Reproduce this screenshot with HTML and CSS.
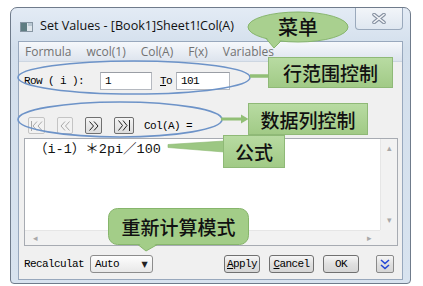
FILE: index.html
```html
<!DOCTYPE html>
<html lang="en">
<head>
    <meta charset="UTF-8">
    <title>Set Values</title>
    <link rel="stylesheet" href="styles.css">
</head>
<body>
    <div class="stage">
        <div class="window">
            <div class="titlebar">
                <svg class="app-icon" width="13" height="10" viewBox="0 0 13 10">
                    <rect x="0.5" y="0.5" width="12" height="9" fill="#dfe6ec" stroke="#8796a3"/>
                    <rect x="1" y="1" width="6" height="8" fill="#5f7d82"/>
                    <rect x="8" y="1" width="4" height="3" fill="#b9c8d3"/>
                </svg>
                <span class="title">Set Values - [Book1]Sheet1!Col(A)</span>
                <div class="close">
                    <svg width="14" height="11" viewBox="0 0 14 11">
                        <path d="M2 1.5 L12 9.5 M12 1.5 L2 9.5" stroke="#8590a0" stroke-width="3.6" stroke-linecap="round"/>
                        <path d="M2 1.5 L12 9.5 M12 1.5 L2 9.5" stroke="#f4f6f9" stroke-width="1.6" stroke-linecap="round"/>
                    </svg>
                </div>
            </div>

            <div class="client">
                <div class="menubar">
                    <span>Formula</span>
                    <span>wcol(1)</span>
                    <span>Col(A)</span>
                    <span>F(x)</span>
                    <span>Variables</span>
                </div>

                <div class="dialog">
                    <!-- row range -->
                    <div class="range-row">
                        <span class="row-label">Row ( i ):</span>
                        <div class="field field-from">1</div>
                        <span class="to-label"><u>T</u>o</span>
                        <div class="field field-to">101</div>
                    </div>

                    <!-- column navigation -->
                    <div class="nav-row">
                        <div class="nav-btn disabled w17">
                            <svg width="13" height="10" viewBox="0 0 13 10"><path d="M1.5 0 V10 M7 0.5 L3 5 L7 9.5 M12 0.5 L8 5 L12 9.5" fill="none" stroke="currentColor"/></svg>
                        </div>
                        <div class="nav-btn disabled w16">
                            <svg width="10" height="10" viewBox="0 0 10 10"><path d="M5 0.5 L1 5 L5 9.5 M9.5 0.5 L5.5 5 L9.5 9.5" fill="none" stroke="currentColor"/></svg>
                        </div>
                        <div class="nav-btn w17">
                            <svg width="10" height="10" viewBox="0 0 10 10"><path d="M0.5 0.5 L4.5 5 L0.5 9.5 M5 0.5 L9 5 L5 9.5" fill="none" stroke="currentColor"/></svg>
                        </div>
                        <div class="nav-btn w20">
                            <svg width="13" height="11" viewBox="0 0 13 11"><path d="M0.5 0.5 L4.5 5.5 L0.5 10.5 M5 0.5 L9 5.5 L5 10.5 M11.5 0 V11" fill="none" stroke="currentColor"/></svg>
                        </div>
                        <span class="col-label">Col(A) =</span>
                    </div>

                    <!-- formula box -->
                    <div class="formula">
                        <div class="formula-text">（i-1）＊2pi／100</div>
                        <div class="vbar">
                            <span class="arrow">▴</span>
                            <span class="arrow">▾</span>
                        </div>
                        <div class="hbar">
                            <span class="arrow">◂</span>
                            <span class="arrow">▸</span>
                        </div>
                        <div class="corner"></div>
                    </div>

                    <div class="footer">
                        <span class="recalc-label">Recalculat</span>
                        <div class="select">
                            <span>Auto</span>
                            <span class="caret">▼</span>
                        </div>
                        <div class="buttons">
                            <div class="btn w36"><u>A</u>pply</div>
                            <div class="btn w45"><u>C</u>ancel</div>
                            <div class="btn w36">OK</div>
                            <div class="btn expand">
                                <svg width="10" height="11" viewBox="0 0 10 11"><path d="M1 1 L5 4.5 L9 1 M1 6 L5 9.5 L9 6" fill="none" stroke="#2346d6" stroke-width="1.6"/></svg>
                            </div>
                        </div>
                    </div>
                </div>
            </div>
        </div>

        <!-- annotation overlay -->
        <svg class="overlay" width="423" height="286" viewBox="0 0 423 286">
            <ellipse cx="134" cy="77.5" rx="116" ry="16.5" fill="none" stroke="#6d93c8" stroke-width="1.6"/>
            <line x1="250" y1="76" x2="269" y2="76" stroke="#92bf76" stroke-width="3.5"/>
            <ellipse cx="120" cy="119.5" rx="102" ry="17.5" fill="none" stroke="#6d93c8" stroke-width="1.6"/>
            <line x1="221" y1="119" x2="243" y2="119" stroke="#92bf76" stroke-width="3"/>
            <polygon points="241,114.5 248.5,119 241,123.5" fill="#92bf76"/>
            <polygon points="168,144.5 168,147.5 224,152 224,141" fill="#9cc783" stroke="#8cb870" stroke-width="0.6"/>

            <polygon points="264,36 283,39 274,48" fill="#a9d08f" stroke="#86b56b"/>
            <ellipse cx="298" cy="27" rx="50" ry="15" fill="#a9d08f" stroke="#86b56b"/>
            <polygon points="266,37 281,39 274,46.5" fill="#a9d08f"/>

            <polygon points="136,243 160,243 146,251" fill="#a3cd88" stroke="#86b56b"/>
            <rect x="108.5" y="208.5" width="140" height="36" rx="9" fill="#a3cd88" stroke="#86b56b"/>
            <polygon points="138,243 158,243 146,249.5" fill="#a3cd88"/>
        </svg>

        <div class="note bubble-menu">菜单</div>
        <div class="note box box-range">行范围控制</div>
        <div class="note box box-data">数据列控制</div>
        <div class="note box box-formula">公式</div>
        <div class="note bubble-recalc">重新计算模式</div>
    </div>
</body>
</html>
```

FILE: styles.css
```css
* {
    margin: 0;
    padding: 0;
    box-sizing: border-box;
}

body {
    width: 423px;
    height: 286px;
    overflow: hidden;
    background: #fff;
    font-family: "Liberation Mono", monospace;
    font-size: 11px;
    color: #000;
}

.stage {
    position: relative;
    width: 423px;
    height: 286px;
    padding: 7px 0 0 10px;
}

/* Window frame */
.window {
    width: 401px;
    height: 277px;
    border: 1px solid #6f7b8b;
    border-radius: 7px 7px 4px 4px;
    background: linear-gradient(#e3ebf5, #d3dfec 40px, #d8e3ef);
    padding: 0 7px 3px 7px;
    display: flex;
    flex-direction: column;
}

.titlebar {
    height: 33px;
    display: flex;
    align-items: flex-start;
    flex-shrink: 0;
}

.app-icon {
    margin: 14px 0 0 2px;
}

.title {
    margin: 10px 0 0 7px;
    font-family: "Open Sans", sans-serif;
    font-size: 12.6px;
    line-height: 16px;
    color: #111;
}

.close {
    margin-left: auto;
    width: 48px;
    height: 22px;
    border: 1px solid #9aa9bc;
    border-top: none;
    border-radius: 0 0 4px 4px;
    background: linear-gradient(#f2f5f9, #dfe7f0);
    display: flex;
    align-items: center;
    justify-content: center;
}

/* Client area */
.client {
    flex: 1;
    border: 1px solid #98a8bd;
    background: #f0f0f0;
    display: flex;
    flex-direction: column;
}

.menubar {
    height: 20px;
    flex-shrink: 0;
    background: linear-gradient(#f6f8fb, #dde4ee);
    border-bottom: 1px solid #cdd6e1;
    display: flex;
    align-items: center;
    gap: 15px;
    padding-left: 6px;
    font-family: "Open Sans", sans-serif;
    font-size: 12px;
    color: #727272;
}

.dialog {
    flex: 1;
    padding: 0 4px 0 5px;
    display: flex;
    flex-direction: column;
    letter-spacing: -0.6px;
}

/* Row range */
.range-row {
    margin-top: 10px;
    height: 18px;
    display: flex;
    align-items: center;
}

.row-label {
    width: 76px;
}

.field {
    height: 18px;
    background: #fff;
    border: 1px solid #b5b9c0;
    border-top-color: #9a9ea5;
    padding-left: 4px;
    line-height: 16px;
}

.field-from {
    width: 52px;
}

.to-label {
    width: 16px;
    margin-left: 8px;
}

.field-to {
    width: 54px;
}

/* Navigation */
.nav-row {
    margin-top: 27px;
    height: 17px;
    display: flex;
    align-items: center;
    padding-left: 4px;
    gap: 12px;
}

.nav-btn {
    height: 17px;
    border: 1px solid #707070;
    border-radius: 2px;
    background: linear-gradient(#f4f4f4, #dcdcdc);
    color: #222;
    display: flex;
    align-items: center;
    justify-content: center;
}

.nav-btn.disabled {
    border-color: #c4c4c4;
    background: #f2f2f2;
    color: #a8a8a8;
}

.w16 { width: 16px; }
.w17 { width: 17px; }
.w20 { width: 20px; }

.col-label {
    margin-left: -2px;
}

/* Formula */
.formula {
    margin-top: 4px;
    width: 374px;
    height: 108px;
    border: 1px solid #a7abb2;
    background: #fff;
    display: grid;
    grid-template-columns: 1fr 17px;
    grid-template-rows: 1fr 15px;
}

.formula-text {
    padding: 3px 0 0 9px;
    font-size: 13.5px;
    line-height: 16px;
    letter-spacing: 0;
    font-family: "Liberation Mono", "Noto Sans CJK SC", monospace;
    color: #111;
}

.vbar {
    background: #f2f2f2;
    border-left: 1px solid #e6e6e6;
    display: flex;
    flex-direction: column;
    justify-content: space-between;
    align-items: center;
    padding: 5px 0 5px;
}

.hbar {
    background: #f2f2f2;
    border-top: 1px solid #e6e6e6;
    display: flex;
    justify-content: space-between;
    align-items: center;
    padding: 0 9px 0 8px;
}

.corner {
    background: #f0f0f0;
}

.arrow {
    font-family: "DejaVu Sans", sans-serif;
    font-size: 9px;
    line-height: 9px;
    color: #a9a9a9;
}

/* Footer */
.footer {
    margin-top: 9px;
    height: 18px;
    display: flex;
    align-items: center;
}

.recalc-label {
    width: 66px;
}

.select {
    width: 63px;
    height: 18px;
    border: 1px solid #8c8c8c;
    border-radius: 3px;
    background: linear-gradient(#fdfdfd, #e8e8e8);
    display: flex;
    align-items: center;
    justify-content: space-between;
    padding: 0 5px 0 4px;
}

.caret {
    font-family: "DejaVu Sans", sans-serif;
    font-size: 8px;
    color: #222;
}

.buttons {
    margin-left: auto;
    margin-right: 4px;
    display: flex;
    gap: 9px;
}

.btn {
    height: 18px;
    border: 1px solid #707070;
    border-radius: 3px;
    background: linear-gradient(#f6f6f6, #e0e0e0 50%, #d6d6d6);
    display: flex;
    align-items: center;
    justify-content: center;
}

.w36 { width: 36px; }
.w45 { width: 45px; }

.btn.expand {
    width: 18px;
    margin-left: 8px;
    border-color: #8a8a8a;
    border-radius: 2px;
}

/* Annotations */
.overlay {
    position: absolute;
    left: 0;
    top: 0;
    pointer-events: none;
}

.note {
    position: absolute;
    display: flex;
    align-items: center;
    justify-content: center;
    font-family: "Noto Sans CJK SC", sans-serif;
    font-size: 19px;
    font-weight: 500;
    color: #111;
    letter-spacing: 0;
}

.box {
    background: linear-gradient(#b8dba2, #a1ca86);
    border: 1px solid #8fb977;
}

.bubble-menu {
    left: 248px;
    top: 12px;
    width: 100px;
    height: 28px;
    font-size: 20px;
}

.box-range {
    left: 268px;
    top: 57px;
    width: 125px;
    height: 31px;
}

.box-data {
    left: 248px;
    top: 103px;
    width: 120px;
    height: 32px;
}

.box-formula {
    left: 223px;
    top: 135px;
    width: 62px;
    height: 33px;
}

.bubble-recalc {
    left: 108px;
    top: 208px;
    width: 141px;
    height: 36px;
}
```
